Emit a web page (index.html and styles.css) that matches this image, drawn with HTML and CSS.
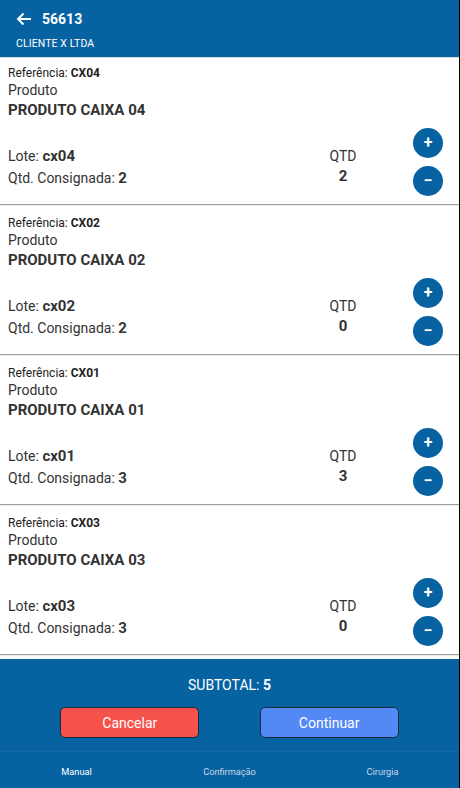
FILE: index.html
```html
<!DOCTYPE html>
<html lang="pt">
<head>
<meta charset="utf-8">
<link rel="stylesheet" href="styles.css">
</head>
<body>
<div class="app">
  <header class="header">
    <div class="title-row">
      <svg class="back" width="16" height="14" viewBox="0 0 16 14"><path d="M15 7H2M7.5 1.5 2 7l5.5 5.5" fill="none" stroke="#fff" stroke-width="2"/></svg>
      <span class="title">56613</span>
    </div>
    <div class="subtitle">CLIENTE X LTDA</div>
  </header>
  <main class="list">
    <div class="item">
      <div class="ref">Referência: <b>CX04</b></div>
      <div class="label">Produto</div>
      <div class="name">PRODUTO CAIXA 04</div>
      <div class="bottom">
        <div class="info">
          <div>Lote: <b>cx04</b></div>
          <div>Qtd. Consignada: <b>2</b></div>
        </div>
        <div class="qtd"><div>QTD</div><b>2</b></div>
        <div class="btns"><button class="round">+</button><button class="round">−</button></div>
      </div>
    </div>
    <div class="item">
      <div class="ref">Referência: <b>CX02</b></div>
      <div class="label">Produto</div>
      <div class="name">PRODUTO CAIXA 02</div>
      <div class="bottom">
        <div class="info">
          <div>Lote: <b>cx02</b></div>
          <div>Qtd. Consignada: <b>2</b></div>
        </div>
        <div class="qtd"><div>QTD</div><b>0</b></div>
        <div class="btns"><button class="round">+</button><button class="round">−</button></div>
      </div>
    </div>
    <div class="item">
      <div class="ref">Referência: <b>CX01</b></div>
      <div class="label">Produto</div>
      <div class="name">PRODUTO CAIXA 01</div>
      <div class="bottom">
        <div class="info">
          <div>Lote: <b>cx01</b></div>
          <div>Qtd. Consignada: <b>3</b></div>
        </div>
        <div class="qtd"><div>QTD</div><b>3</b></div>
        <div class="btns"><button class="round">+</button><button class="round">−</button></div>
      </div>
    </div>
    <div class="item">
      <div class="ref">Referência: <b>CX03</b></div>
      <div class="label">Produto</div>
      <div class="name">PRODUTO CAIXA 03</div>
      <div class="bottom">
        <div class="info">
          <div>Lote: <b>cx03</b></div>
          <div>Qtd. Consignada: <b>3</b></div>
        </div>
        <div class="qtd"><div>QTD</div><b>0</b></div>
        <div class="btns"><button class="round">+</button><button class="round">−</button></div>
      </div>
    </div>
  </main>
  <footer class="footer">
    <div class="subtotal">SUBTOTAL: <b>5</b></div>
    <div class="actions">
      <button class="act cancel">Cancelar</button>
      <button class="act go">Continuar</button>
    </div>
  </footer>
  <nav class="tabs">
    <span class="tab active">Manual</span>
    <span class="tab">Confirmação</span>
    <span class="tab">Cirurgia</span>
  </nav>
</div>
</body>
</html>
```

FILE: styles.css
```css
* { box-sizing: border-box; }
html, body { margin: 0; padding: 0; background: #000; }
body { font-family: Roboto, "Noto Sans", sans-serif; color: #333; }
.app {
  width: 459px;
  height: 788px;
  background: #fff;
  display: flex;
  flex-direction: column;
  overflow: hidden;
}
.header {
  height: 58px;
  flex: none;
  background: #0762a2;
  border-bottom: 1px solid #d8d8d8;
  color: #fff;
  padding: 10px 16px 0 16px;
}
.title-row { display: flex; align-items: center; height: 18px; gap: 10px; }
.back { display: block; }
.title { font-size: 14px; font-weight: 700; }
.subtitle { font-size: 10.5px; margin-top: 9px; letter-spacing: 0.1px; }
.list { flex: 1; overflow: hidden; min-height: 0; }
.item {
  padding: 7px 16px 8px 8px;
  border-bottom: 1px solid #9c9c9c;
  margin-bottom: 3px;
  box-shadow: 0 1px 0 #ececec;
}
.ref { font-size: 12px; line-height: 16px; color: #222; }
.label { font-size: 14px; line-height: 18px; color: #333; }
.name { font-size: 15px; line-height: 22px; font-weight: 700; color: #333; }
.bottom {
  margin-top: 7px;
  display: flex;
  align-items: flex-end;
  height: 68px;
}
.info { flex: 1; font-size: 14px; line-height: 22px; padding-bottom: 7px; color: #333; }
.info b { font-size: 15px; }
.qtd {
  width: 60px;
  text-align: center;
  font-size: 14px;
  line-height: 20px;
  padding-bottom: 10px;
  margin-right: 40px;
}
.qtd b { font-size: 15px; display: block; }
.btns { display: flex; flex-direction: column; gap: 8px; }
.round {
  width: 30px; height: 30px;
  border-radius: 50%;
  border: none;
  background: #0762a2;
  color: #fff;
  font-family: Roboto, sans-serif;
  font-size: 16px;
  font-weight: 700;
  padding: 0;
  line-height: 30px;
}
.footer {
  height: 92px;
  flex: none;
  background: #0762a2;
  color: #fff;
  padding-top: 17px;
}
.subtotal { text-align: center; font-size: 14px; line-height: 18px; }
.actions { display: flex; justify-content: space-evenly; margin-top: 13px; }
.act {
  width: 139px; height: 31px;
  border: 1px solid #1a2a3a;
  border-radius: 5px;
  color: #fff;
  font-family: Roboto, sans-serif;
  font-size: 14px;
}
.cancel { background: #f4524a; }
.go { background: #5389f4; }
.tabs {
  height: 37px;
  flex: none;
  background: #0762a2;
  border-top: 1px solid #1569a6;
  display: flex;
  align-items: center;
}
.tab { flex: 1; text-align: center; font-size: 9.2px; color: #c9d7e6; padding-top: 2px; }
.tab.active { color: #fff; }
```
